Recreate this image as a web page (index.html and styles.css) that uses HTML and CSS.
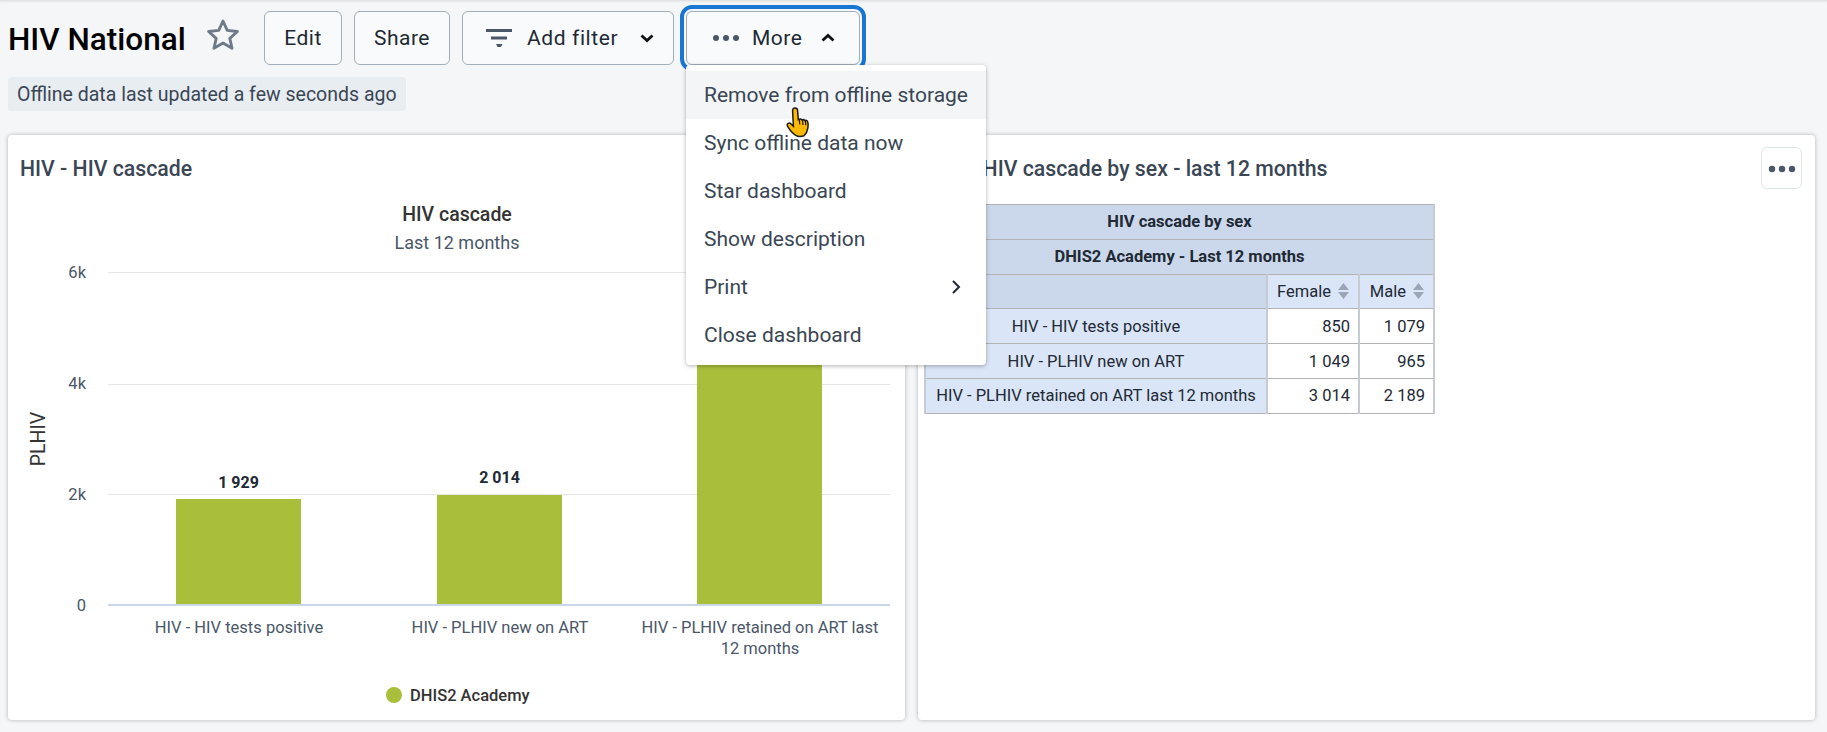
FILE: index.html
```html
<!DOCTYPE html>
<html lang="en">
<head>
    <meta charset="UTF-8">
    <meta name="viewport" content="width=device-width, initial-scale=1.0">
    <title>HIV National</title>
    <link rel="stylesheet" href="styles.css">
</head>
<body>
    <header class="dash-header">
        <div class="title-row">
            <h1 class="dash-title">HIV National</h1>
            <svg class="star-icon" width="38" height="38" viewBox="0 0 24 24"><path d="M12 3.200l2.700 5.900 6.400.7-4.800 4.300 1.400 6.300-5.700-3.300-5.700 3.300 1.400-6.300-4.800-4.300 6.400-.7z" fill="none" stroke="#6e7a8a" stroke-width="1.800" stroke-linejoin="round"/></svg>
            <button class="btn btn-edit">Edit</button>
            <button class="btn btn-share">Share</button>
            <button class="btn btn-filter">
                <svg width="26" height="24" viewBox="0 0 26 24"><path d="M0 3h26v3H0zM5 10.500h16v3H5zM10 18h6.500l-1.500 3h-3.500z" fill="#4a5768"/></svg>
                <span>Add filter</span>
                <svg class="chev" width="16" height="10" viewBox="0 0 16 10"><path d="M2.500 2.500l5.500 5 5.500-5" fill="none" stroke="#111" stroke-width="2.800"/></svg>
            </button>
            <div class="more-wrap">
                <button class="btn btn-more">
                    <svg width="28" height="8" viewBox="0 0 28 8"><circle cx="4" cy="4" r="3" fill="#4a5768"/><circle cx="14" cy="4" r="3" fill="#4a5768"/><circle cx="24" cy="4" r="3" fill="#4a5768"/></svg>
                    <span>More</span>
                    <svg class="chev" width="16" height="10" viewBox="0 0 16 10"><path d="M2.500 7.500l5.500-5 5.500 5" fill="none" stroke="#111" stroke-width="2.800"/></svg>
                </button>
                <ul class="menu">
                    <li class="menu-item hover">Remove from offline storage</li>
                    <li class="menu-item">Sync offline data now</li>
                    <li class="menu-item">Star dashboard</li>
                    <li class="menu-item">Show description</li>
                    <li class="menu-item">Print
                        <svg width="10" height="16" viewBox="0 0 10 16"><path d="M2 2l6 6-6 6" fill="none" stroke="#212934" stroke-width="2"/></svg>
                    </li>
                    <li class="menu-item">Close dashboard</li>
                </ul>
                <svg class="cursor" width="30" height="34" viewBox="0 0 30 34"><path d="M10 2c1.600 0 2.500 1 2.600 2.600l.7 9 1-.4c1-.3 2-.1 2.500.7 1-.6 2.300-.4 2.900.6 1-.5 2.300-.2 2.800.8.500 1 .8 3.700.4 6.500-.4 3-1.900 6-3.900 8-2.500.8-6 .9-8.200-.4-2.400-1.500-6.800-6.700-8.300-9.300-.7-1.200-.3-2.300.6-2.800 1-.5 2.200-.2 3 .7l2.300 2.300L7.600 4.800C7.500 3.200 8.400 2 10 2z" fill="#ffb900" stroke="#1b1b1b" stroke-width="1.500"/><path d="M14.300 13.500l.5 5M17.600 14l.4 5M20.500 14.700l.2 4.500" stroke="#1b1b1b" stroke-width="1.200" fill="none"/></svg>
            </div>
        </div>
        <div class="offline-tag">Offline data last updated a few seconds ago</div>
    </header>

    <main class="dash-grid">
        <section class="card">
            <h2 class="card-title">HIV - HIV cascade</h2>
            <svg class="chart" width="897" height="586" viewBox="0 0 897 586">
                <text class="chart-title" x="449" y="87" text-anchor="middle">HIV cascade</text>
                <text class="chart-sub" x="449" y="115" text-anchor="middle">Last 12 months</text>

                <g class="grid">
                    <line x1="100" x2="882" y1="138.500" y2="138.500"/>
                    <line x1="100" x2="882" y1="250.500" y2="250.500"/>
                    <line x1="100" x2="882" y1="360.500" y2="360.500"/>
                </g>
                <line class="axis" x1="100" x2="882" y1="471" y2="471"/>

                <g class="tick">
                    <text x="78" y="144" text-anchor="end">6k</text>
                    <text x="78" y="255" text-anchor="end">4k</text>
                    <text x="78" y="366" text-anchor="end">2k</text>
                    <text x="78" y="477" text-anchor="end">0</text>
                </g>
                <text class="y-title" transform="translate(37 305) rotate(-90)" text-anchor="middle">PLHIV</text>

                <g class="bars">
                    <rect x="168" y="365" width="125" height="105"/>
                    <rect x="429" y="361" width="125" height="109"/>
                    <rect x="689" y="183" width="125" height="287"/>
                </g>
                <g class="bar-label">
                    <text x="230.500" y="354" text-anchor="middle">1 929</text>
                    <text x="491.500" y="349" text-anchor="middle">2 014</text>
                </g>
                <g class="cat">
                    <text x="231" y="499" text-anchor="middle">HIV - HIV tests positive</text>
                    <text x="492" y="499" text-anchor="middle">HIV - PLHIV new on ART</text>
                    <text x="752" y="499" text-anchor="middle">HIV - PLHIV retained on ART last</text>
                    <text x="752" y="520" text-anchor="middle">12 months</text>
                </g>
                <circle class="legend-dot" cx="386" cy="561" r="8"/>
                <text class="legend-text" x="402" y="567">DHIS2 Academy</text>
            </svg>
        </section>

        <section class="card">
            <h2 class="card-title">HIV - HIV cascade by sex - last 12 months</h2>
            <button class="card-more"><svg width="30" height="8" viewBox="0 0 30 8"><circle cx="5" cy="4" r="3.200"/><circle cx="15" cy="4" r="3.200"/><circle cx="25" cy="4" r="3.200"/></svg></button>
            <table class="pivot">
                <colgroup>
                    <col class="col-name">
                    <col class="col-female">
                    <col class="col-male">
                </colgroup>
                <tr><th class="head" colspan="3">HIV cascade by sex</th></tr>
                <tr><th class="head" colspan="3">DHIS2 Academy - Last 12 months</th></tr>
                <tr>
                    <th class="empty"></th>
                    <th class="col">Female<svg class="sort" width="13" height="18" viewBox="0 0 13 18"><path d="M6.500 1l5.500 7H1zM6.500 17L1 10h11z"/></svg></th>
                    <th class="col">Male<svg class="sort" width="13" height="18" viewBox="0 0 13 18"><path d="M6.500 1l5.500 7H1zM6.500 17L1 10h11z"/></svg></th>
                </tr>
                <tr><td class="rowh">HIV - HIV tests positive</td><td class="val">850</td><td class="val">1 079</td></tr>
                <tr><td class="rowh">HIV - PLHIV new on ART</td><td class="val">1 049</td><td class="val">965</td></tr>
                <tr><td class="rowh">HIV - PLHIV retained on ART last 12 months</td><td class="val">3 014</td><td class="val">2 189</td></tr>
            </table>
        </section>
    </main>
</body>
</html>
```

FILE: styles.css
```css
* {
    box-sizing: border-box;
}

html,
body {
    height: 732px;
    overflow: hidden;
}

body {
    margin: 0;
    background-color: #f4f6f8;
    font-family: Roboto, "Liberation Sans", sans-serif;
    color: #212934;
    box-shadow: inset 0 3px 3px -2px rgba(0, 0, 0, 0.12);
}

.dash-header {
    padding: 11px 8px 0;
    height: 135px;
}

.title-row {
    display: flex;
    align-items: center;
    height: 54px;
}

.dash-title {
    width: 177px;
    margin: 2px 0 0;
    font-size: 31.500px;
    font-weight: 500;
    color: #000;
    white-space: nowrap;
}

.star-icon {
    margin: 0 22px 7px 19px;
    flex: none;
}

.btn {
    height: 54px;
    display: flex;
    align-items: center;
    background-color: #f9fafb;
    border: 1px solid #a0adba;
    border-radius: 6px;
    font-family: inherit;
    font-size: 21px;
    color: #212934;
    letter-spacing: 0.5px;
    padding: 0;
}

.btn-edit {
    width: 78px;
    justify-content: center;
}

.btn-share {
    width: 96px;
    margin-left: 12px;
    justify-content: center;
}

.btn-filter {
    width: 212px;
    margin-left: 12px;
    padding-left: 23px;
    gap: 15px;
    letter-spacing: 0.600px;
}

.more-wrap {
    position: relative;
    margin-left: 12px;
}

.btn-more {
    width: 174px;
    padding-left: 25px;
    gap: 12px;
    outline: 4px solid #1976d2;
    outline-offset: 2px;
}

.chev {
    margin-left: 6px;
}

.menu {
    position: absolute;
    top: 54px;
    left: 0;
    z-index: 5;
    width: 300px;
    margin: 0;
    padding: 6px 0;
    list-style: none;
    background: white;
    border-radius: 4px;
    box-shadow: 0 1px 4px rgba(0, 0, 0, 0.3);
}

.menu-item {
    height: 48px;
    padding: 0 25px 0 18px;
    display: flex;
    align-items: center;
    justify-content: space-between;
    font-size: 21px;
    color: #3a4654;
    white-space: nowrap;
}

.menu-item.hover {
    background-color: #f3f5f7;
}

.cursor {
    position: absolute;
    top: 95px;
    left: 99px;
    z-index: 6;
}

.offline-tag {
    display: inline-block;
    margin-top: 12px;
    height: 34px;
    line-height: 36px;
    padding: 0 9px;
    background-color: #e8edf2;
    border-radius: 4px;
    font-size: 19.500px;
    color: #3a4654;
}

.dash-grid {
    display: grid;
    grid-template-columns: 897px 897px;
    gap: 13px;
    padding: 0 8px;
}

.card {
    position: relative;
    height: 585px;
    background: white;
    border-radius: 4px;
    box-shadow: 0 0 4px rgba(0, 0, 0, 0.28);
}

.card-title {
    margin: 0;
    padding: 21px 12px 0;
    height: 46px;
    font-size: 21.250px;
    font-weight: 500;
    line-height: 26px;
    color: #3a4654;
}

.card-more {
    position: absolute;
    top: 12px;
    right: 13px;
    width: 41px;
    height: 42px;
    padding: 0;
    background: white;
    border: 1px solid #dfe5ec;
    border-radius: 6px;
}

.card-more circle {
    fill: #4a5768;
}

.chart {
    position: absolute;
    top: -1px;
    left: 0;
}

.chart text {
    font-family: Roboto, "Liberation Sans", sans-serif;
}

.chart-title {
    font-size: 19.500px;
    font-weight: 500;
    fill: #333;
}

.chart-sub {
    font-size: 18px;
    fill: #4a5768;
}

.grid line {
    stroke: #e6e6e6;
    stroke-width: 1;
}

.axis {
    stroke: #ccd6eb;
    stroke-width: 2;
}

.tick text {
    font-size: 16.500px;
    fill: #4a5768;
}

.y-title {
    font-size: 19.500px;
    fill: #333;
}

.bars rect {
    fill: #a9be3b;
}

.bar-label text {
    font-size: 16px;
    font-weight: 700;
    fill: #212934;
}

.cat text {
    font-size: 16.500px;
    fill: #4a5768;
}

.legend-dot {
    fill: #a9be3b;
}

.legend-text {
    font-size: 16.500px;
    font-weight: 500;
    fill: #333;
}

.pivot {
    position: relative;
    margin-left: 6px;
    margin-top: 23px;
    width: 509px;
    table-layout: fixed;
    border-collapse: collapse;
    font-size: 16.500px;
}

.col-name {
    width: 342px;
}

.col-female {
    width: 92px;
}

.col-male {
    width: 75px;
}

.pivot th,
.pivot td {
    border-top: 1px solid #b3b3b3;
    border-bottom: 1px solid #b3b3b3;
    border-left: 2px solid #c6cbd1;
    border-right: 2px solid #c6cbd1;
    padding: 0 8px;
    height: 34.800px;
}

.pivot .head {
    background-color: #cbd8ec;
    font-weight: 700;
    text-align: center;
}

.pivot .empty {
    background-color: #cbd8ec;
}

.pivot .col {
    background-color: #dae5f7;
    font-weight: 400;
    text-align: right;
    white-space: nowrap;
}

.pivot .rowh {
    background-color: #dae5f7;
    text-align: center;
    white-space: nowrap;
}

.pivot .val {
    text-align: right;
}

.sort {
    margin-left: 6px;
    vertical-align: -3px;
}

.sort path {
    fill: #9aa6b4;
}
```
